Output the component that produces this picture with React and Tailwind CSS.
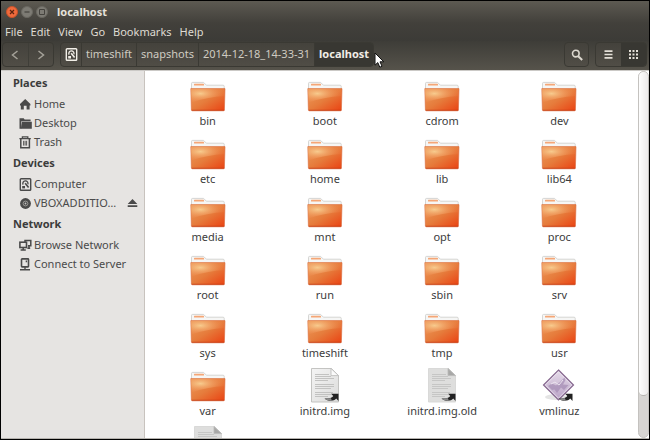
import React from "react";

const MENUS = ["File", "Edit", "View", "Go", "Bookmarks", "Help"];

const FILES = [
  "bin", "boot", "cdrom", "dev",
  "etc", "home", "lib", "lib64",
  "media", "mnt", "opt", "proc",
  "root", "run", "sbin", "srv",
  "sys", "timeshift", "tmp", "usr",
  "var",
].map((name) => ({ name, kind: "folder" })).concat([
  { name: "initrd.img", kind: "link" },
  { name: "initrd.img.old", kind: "old" },
  { name: "vmlinuz", kind: "program" },
  { name: "", kind: "file" },
]);

function DiskIcon() {
  return (
    <svg width="13" height="13" viewBox="0 0 13 13" fill="none" className="block shrink-0" aria-hidden="true">
      <rect x="1.3" y="0.8" width="10.4" height="11.4" rx="0.8" stroke="currentColor" strokeWidth="1.4" />
      <path d="M4.1 6.6A2.6 2.6 0 1 1 8.9 6.2" stroke="currentColor" strokeWidth="1.3" />
      <path d="M6.2 5.2 9.6 9.6" stroke="currentColor" strokeWidth="1.6" />
      <path d="M3.2 8H6v2.4H3.2z" fill="currentColor" />
    </svg>
  );
}

function HomeIcon() {
  return (
    <svg width="13" height="13" viewBox="0 0 13 13" fill="currentColor" className="block shrink-0" aria-hidden="true">
      <path d="M6.2 1 11.4 6v1.4h-.8V11.4H7.6V7.8H4.8v3.6H1.8V7.4H1V6z" />
    </svg>
  );
}

function DesktopIcon() {
  return (
    <svg width="13" height="13" viewBox="0 0 13 13" className="block shrink-0" aria-hidden="true">
      <path d="M0.5 11.8V1.2h4.2l.9 1.4h6v1.6H2.3v7.6z" fill="currentColor" />
      <path d="M3 4.8h9.8v7H1.8z" fill="currentColor" />
    </svg>
  );
}

function TrashIcon() {
  return (
    <svg width="13" height="13" viewBox="0 0 13 13" fill="none" stroke="currentColor" className="block shrink-0" aria-hidden="true">
      <path d="M0.4 2.6h11.4M3.4 2.4V0.9h5.4v1.5" strokeWidth="1.3" />
      <path d="M1.8 3v8.8h8.6V3" strokeWidth="1.5" />
      <path d="M4.6 4.8v4.8M6.1 4.8v4.8M7.6 4.8v4.8" strokeWidth="0.9" />
    </svg>
  );
}

function DiscIcon() {
  return (
    <svg width="13" height="13" viewBox="0 0 13 13" className="block shrink-0" aria-hidden="true">
      <circle cx="6.5" cy="6.5" r="5.4" fill="currentColor" />
      <circle cx="6.5" cy="6.5" r="2.4" fill="none" stroke="#aaa8a5" strokeWidth="0.8" />
      <circle cx="6.5" cy="6.5" r="0.9" fill="#c6c4c2" />
    </svg>
  );
}

function NetworkIcon() {
  return (
    <svg width="13" height="13" viewBox="0 0 13 13" fill="none" stroke="currentColor" className="block shrink-0" aria-hidden="true">
      <path d="M6 3V1.5h5.8v5.2H8.9" strokeWidth="1.5" />
      <rect x="0.9" y="3.2" width="6.6" height="5.3" strokeWidth="1.6" />
      <path d="M4.2 8.5v2M1.6 11h5.2M8.4 9.2h2.8M10 6.7v2.4" strokeWidth="1.5" />
    </svg>
  );
}

function ServerIcon() {
  return (
    <svg width="13" height="13" viewBox="0 0 13 13" fill="none" stroke="currentColor" className="block shrink-0" aria-hidden="true">
      <rect x="2.5" y="0.9" width="7" height="8" rx="0.6" strokeWidth="1.6" />
      <path d="M7.4 2.6v1.6M6 9v2.6M1 11.8h10" strokeWidth="1.4" />
    </svg>
  );
}

function EjectIcon() {
  return (
    <svg width="11" height="9" viewBox="0 0 11 9" fill="currentColor" className="block" aria-hidden="true">
      <path d="M5.5 0 10.3 5H0.7zM0.7 6.2h9.6v1.9H0.7z" />
    </svg>
  );
}

const SIDEBAR = [
  { title: "Places", items: [["Home", HomeIcon], ["Desktop", DesktopIcon], ["Trash", TrashIcon]] },
  { title: "Devices", items: [["Computer", DiskIcon], ["VBOXADDITIO…", DiscIcon, true]] },
  { title: "Network", items: [["Browse Network", NetworkIcon], ["Connect to Server", ServerIcon]] },
];

function FolderIcon() {
  return (
    <svg width="36" height="36" viewBox="0 0 36 36" className="block" aria-hidden="true">
      <path d="M1.5 12V6.3Q1.5 5.4 2.6 5.4H13.6L16.4 8.2H33Q34.2 8.2 34.2 9.2V14H1.5z" fill="#f6f6f5" stroke="#cccbc9" strokeWidth="0.8" />
      <rect x="4" y="6.8" width="10" height="1.8" rx="0.6" fill="#f5a676" />
      <path d="M0.8 11.6H35L34.4 33Q34.4 33.8 33.4 33.8H2.4Q1.5 33.8 1.4 33z" fill="url(#folder-face)" stroke="#d9683a" strokeWidth="0.6" />
      <path d="M1 11.8H34.8L34.6 19Q17 20 1.5 25.5z" fill="url(#folder-glow)" />
      <path d="M1.5 32.8H34.3V33.8H1.9z" fill="#c23a12" opacity="0.7" />
    </svg>
  );
}

function LinkArrow() {
  return (
    <g>
      <path d="M17.5 31.5C21 34.6 27 34.5 29.2 31.6L31.5 34V26.8H24L26.3 29C24.6 31.5 20.5 31.8 17.5 31.5z" fill="#222" />
      <path d="M17.5 31.5C20 33.6 23 34 25 33.4L23.6 31C21.5 31.8 19 31.8 17.5 31.5z" fill="#8b8b8b" />
    </g>
  );
}

function PaperIcon({ link, flat }) {
  return (
    <svg width="36" height="36" viewBox="0 0 36 36" className="block" aria-hidden="true">
      <path d="M4.5 1.5H24.5L31.5 8.5V35H4.5z" fill={flat ? "#dededd" : "url(#paper-face)"} stroke={flat ? "#d6d6d5" : "#bdbdbb"} strokeWidth="0.9" />
      <path d="M24 1.5V8.6H31.5z" fill={flat ? "#a8a8a7" : "#fbfbfb"} stroke="#b9b9b8" strokeWidth="0.8" />
      <path
        d="M8 7.5h14M8 9.5h16M8 11.5h19M8 13.5h13M8 17.5h19M8 19.5h19M8 21.5h16M8 25.5h18M8 27.5h16M8 29.5h13"
        stroke={flat ? "#c6c6c5" : "#c2c2c1"}
        strokeWidth="1.2"
      />
      {link && <LinkArrow />}
    </svg>
  );
}

function ProgramIcon() {
  return (
    <svg width="36" height="36" viewBox="0 0 36 36" className="block" aria-hidden="true">
      <ellipse cx="15" cy="30" rx="11" ry="3" fill="#e4e4e4" />
      <path d="M17.5 3 32.5 18 17.5 33 2.5 18z" fill="url(#program-face)" stroke="#86688f" strokeWidth="1.2" />
      <path d="M17.5 4.8 30.7 18 17.5 31.2 4.3 18z" fill="none" stroke="#efe7f2" strokeWidth="0.8" />
      <path d="M7 19 11 16.5 15 18.5 19 15 23.5 10.5 24.5 13 22 17.5 27.5 18 23 23 20 20.5 16 26 13.5 22.5 11 23z" fill="#a48bb4" opacity="0.7" />
      <path d="M10 17l4-2 4 3 4-5" fill="none" stroke="#ece4f0" strokeWidth="1" />
      <LinkArrow />
    </svg>
  );
}

function FileIcon({ kind }) {
  if (kind === "folder") return <FolderIcon />;
  if (kind === "program") return <ProgramIcon />;
  return <PaperIcon link={kind !== "file"} flat={kind !== "link"} />;
}

function Gradients() {
  return (
    <svg width="0" height="0" className="absolute" aria-hidden="true">
      <defs>
        <linearGradient id="folder-face" x1="0" y1="0" x2="1" y2="1">
          <stop offset="0" stopColor="#ec9a5a" />
          <stop offset="0.5" stopColor="#e67c3c" />
          <stop offset="1" stopColor="#ea4212" />
        </linearGradient>
        <radialGradient id="folder-glow" cx="0.28" cy="0.35" r="0.7">
          <stop offset="0" stopColor="#f8cf92" stopOpacity="0.95" />
          <stop offset="1" stopColor="#f08a50" stopOpacity="0.15" />
        </radialGradient>
        <linearGradient id="paper-face" x1="0" y1="0" x2="1" y2="1">
          <stop offset="0" stopColor="#f4f4f4" />
          <stop offset="1" stopColor="#dcdcdb" />
        </linearGradient>
        <linearGradient id="program-face" x1="0" y1="0" x2="0" y2="1">
          <stop offset="0" stopColor="#e6dcea" />
          <stop offset="1" stopColor="#b9a2c6" />
        </linearGradient>
      </defs>
    </svg>
  );
}

function TitleBar() {
  const round = "flex size-3 items-center justify-center rounded-full border";
  return (
    <header className="flex h-[22px] shrink-0 items-center gap-[3px] bg-linear-to-b from-[#5d5a52] to-[#42403b] pl-[5px]">
      <button aria-label="Close" className={`${round} border-[#c9532a] bg-[#f06a3c] text-[#5c2410]`}>
        <svg width="6" height="6" viewBox="0 0 6 6" stroke="currentColor" strokeWidth="1.2" aria-hidden="true">
          <path d="M1 1l4 4M5 1L1 5" />
        </svg>
      </button>
      <button aria-label="Minimize" className={`${round} border-[#6a6861] bg-[#7d7b74] text-[#45433e]`}>
        <svg width="6" height="6" viewBox="0 0 6 6" stroke="currentColor" strokeWidth="1.2" aria-hidden="true">
          <path d="M0.5 3h5" />
        </svg>
      </button>
      <button aria-label="Maximize" className={`${round} border-[#6a6861] bg-[#7d7b74] text-[#45433e]`}>
        <svg width="6" height="6" viewBox="0 0 6 6" stroke="currentColor" fill="none" aria-hidden="true">
          <path d="M0.5 0.5h5v5h-5z" />
        </svg>
      </button>
      <h1 className="pl-[6px] text-[11px] font-bold text-[#e6e2da]">localhost</h1>
    </header>
  );
}

function Toolbar() {
  const group = "flex h-[25px] shrink-0 rounded border border-[#3a3933] bg-linear-to-b from-[#44423c] to-[#504d46] overflow-hidden";
  const center = "flex items-center justify-center";
  const crumb = "flex items-center border-r border-[#3a3933] px-1";
  return (
    <div className="flex h-[30px] shrink-0 items-start border-b border-[#cbc9c6] bg-linear-to-b from-[#3e3d38] to-[#56534b] pt-px pr-[2px] pl-px text-[11px] text-[#cfcbc2]">
      <div className={`${group} w-[52px] text-[#a5a299]`}>
        <button aria-label="Back" className={`${center} flex-1 border-r border-[#3f3e38]`}>
          <svg width="8" height="10" viewBox="0 0 8 10" fill="none" stroke="currentColor" strokeWidth="1.5" aria-hidden="true">
            <path d="M6.5 1 1.5 5l5 4" />
          </svg>
        </button>
        <button aria-label="Forward" className={`${center} flex-1`}>
          <svg width="8" height="10" viewBox="0 0 8 10" fill="none" stroke="currentColor" strokeWidth="1.5" aria-hidden="true">
            <path d="M1.5 1l5 4-5 4" />
          </svg>
        </button>
      </div>
      <nav aria-label="Path" className={`${group} ml-[6px]`}>
        <button aria-label="Filesystem root" className="flex w-[21px] items-center justify-center border-r border-[#3a3933] text-[#f2efe8]"><DiskIcon /></button>
        <button className={crumb}>timeshift</button>
        <button className={crumb}>snapshots</button>
        <button className={crumb}>2014-12-18_14-33-31</button>
        <button className="flex items-center bg-[#383732] px-1 font-bold text-[#f0ede6]">localhost</button>
      </nav>
      <svg width="12" height="17" viewBox="0 0 12 17" className="mt-[10px] shrink-0" aria-hidden="true">
        <path d="M1 1v12.2l2.8-2.6 2 4.6 2.2-1-2-4.4h3.8z" fill="#fff" stroke="#111" />
      </svg>
      <div className="flex-1" />
      <button aria-label="Search" className={`${group} ${center} w-[25px] text-[#dcd8cf]`}>
        <svg width="12" height="12" viewBox="0 0 12 12" fill="none" stroke="currentColor" aria-hidden="true">
          <circle cx="4.8" cy="4.6" r="3.3" strokeWidth="1.6" />
          <path d="M7.2 7.2l4 3.8" strokeWidth="2" />
        </svg>
      </button>
      <div className={`${group} ml-[6px] w-[52px] text-[#e4e0d8]`}>
        <button aria-label="List view" className={`${center} flex-1`}>
          <svg width="9" height="9" viewBox="0 0 9 9" stroke="currentColor" strokeWidth="1.7" aria-hidden="true">
            <path d="M0.5 1.2h8M0.5 4.5h8M0.5 7.8h8" />
          </svg>
        </button>
        <button aria-label="Icon view" className={`${center} flex-1 bg-[#383732]`}>
          <svg width="9" height="9" viewBox="0 0 9 9" fill="currentColor" aria-hidden="true">
            <path d="M0 0h2v2H0zM3.5 0h2v2h-2zM7 0h2v2H7zM0 3.5h2v2H0zM3.5 3.5h2v2h-2zM7 3.5h2v2H7zM0 7h2v2H0zM3.5 7h2v2h-2zM7 7h2v2H7z" />
          </svg>
        </button>
      </div>
    </div>
  );
}

function Sidebar() {
  return (
    <aside className="w-36 shrink-0 border-r border-[#c8c3be] bg-[#e6e4e2] pt-px pl-3 text-[11px] text-[#4a4a4a]">
      {SIDEBAR.map(({ title, items }) => (
        <section key={title}>
          <h2 className="flex h-[23px] items-center font-bold text-[#3c3c3c]">{title}</h2>
          <ul className="pl-[6px]">
            {items.map(([label, Icon, ejectable]) => (
              <li key={label} className="flex h-[19px] items-center justify-between pr-[6px]">
                <a href="#" className="flex items-center gap-[2px] whitespace-nowrap">
                  <Icon />
                  {label}
                </a>
                {ejectable && <button aria-label="Eject"><EjectIcon /></button>}
              </li>
            ))}
          </ul>
        </section>
      ))}
    </aside>
  );
}

export default function App() {
  return (
    <div className="flex h-screen flex-col overflow-hidden border border-black bg-white font-['Noto_Sans','Open_Sans',sans-serif]">
      <Gradients />
      <TitleBar />
      <nav aria-label="Menu" className="flex h-[18px] shrink-0 items-center gap-2 bg-linear-to-b from-[#42403b] to-[#3c3b37] px-1 text-[11px] text-[#dfdbd2]">
        {MENUS.map((m) => <button key={m}>{m}</button>)}
      </nav>
      <Toolbar />
      <div className="flex min-h-0 flex-1 border-b border-[#b5b2ae]">
        <Sidebar />
        <main className="min-w-0 flex-1 overflow-hidden pt-[6px] pr-5 pl-1">
          <ul className="grid grid-cols-[repeat(auto-fill,minmax(116px,1fr))]">
            {FILES.map(({ name, kind }) => (
              <li key={name} className="flex h-[58px] justify-center">
                <button aria-label={name || "File"} className="flex flex-col items-center self-start text-[11px] leading-4 text-[#3c3c3c]">
                  <FileIcon kind={kind} />
                  {name}
                </button>
              </li>
            ))}
          </ul>
        </main>
        <div className="flex w-[11px] shrink-0 flex-col rounded-full border border-[#c4c2bf] bg-[#d6d4d2]">
          <div className="h-8/9 rounded-full border-b border-[#b5b3b0] bg-linear-to-r from-[#fdfdfd] to-[#eceaea]" />
        </div>
      </div>
    </div>
  );
}
